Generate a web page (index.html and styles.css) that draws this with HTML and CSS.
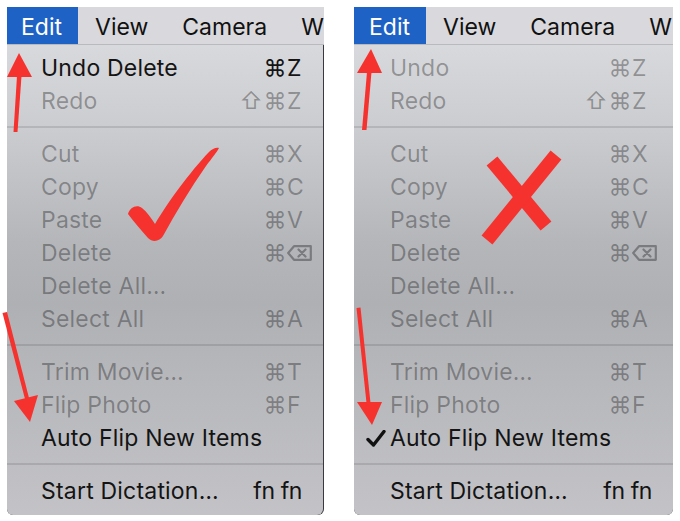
FILE: index.html
```html
<!DOCTYPE html>
<html>
<head>
<meta charset="utf-8">
<link rel="stylesheet" href="styles.css">
</head>
<body>
<div class="stage">
  <div class="panel panel-left">
    <div class="menubar">
      <span class="mb-item active">Edit</span>
      <span class="mb-item">View</span>
      <span class="mb-item">Camera</span>
      <span class="mb-item">W</span>
    </div>
    <div class="menu">
      <div class="row"><span class="chk"></span><span class="label">Undo Delete</span><span class="mods">⌘</span><span class="key">Z</span></div>
      <div class="row off"><span class="chk"></span><span class="label">Redo</span><span class="mods">⇧⌘</span><span class="key">Z</span></div>
      <div class="sep"></div>
      <div class="row off"><span class="chk"></span><span class="label">Cut</span><span class="mods">⌘</span><span class="key">X</span></div>
      <div class="row off"><span class="chk"></span><span class="label">Copy</span><span class="mods">⌘</span><span class="key">C</span></div>
      <div class="row off"><span class="chk"></span><span class="label">Paste</span><span class="mods">⌘</span><span class="key">V</span></div>
      <div class="row off"><span class="chk"></span><span class="label">Delete</span><span class="mods">⌘</span><span class="key"><svg class="del" viewBox="0 0 25 16"><path d="M7 1.2 H23.8 V14.8 H7 L1.2 8 Z" fill="none" stroke="currentColor" stroke-width="2.2" stroke-linejoin="round"/><path d="M11.5 4.5 L18.5 11.5 M18.5 4.5 L11.5 11.5" stroke="currentColor" stroke-width="2.2" stroke-linecap="round"/></svg></span></div>
      <div class="row off"><span class="chk"></span><span class="label">Delete All…</span><span class="mods"></span><span class="key"></span></div>
      <div class="row off"><span class="chk"></span><span class="label">Select All</span><span class="mods">⌘</span><span class="key">A</span></div>
      <div class="sep"></div>
      <div class="row off"><span class="chk"></span><span class="label">Trim Movie…</span><span class="mods">⌘</span><span class="key">T</span></div>
      <div class="row off"><span class="chk"></span><span class="label">Flip Photo</span><span class="mods">⌘</span><span class="key">F</span></div>
      <div class="row"><span class="chk"></span><span class="label">Auto Flip New Items</span><span class="mods"></span><span class="key"></span></div>
      <div class="sep"></div>
      <div class="row"><span class="chk"></span><span class="label">Start Dictation…</span><span class="fn">fn fn</span></div>
    </div>
  </div>

  <div class="panel panel-right">
    <div class="menubar">
      <span class="mb-item active">Edit</span>
      <span class="mb-item">View</span>
      <span class="mb-item">Camera</span>
      <span class="mb-item">W</span>
    </div>
    <div class="menu">
      <div class="row off"><span class="chk"></span><span class="label">Undo</span><span class="mods">⌘</span><span class="key">Z</span></div>
      <div class="row off"><span class="chk"></span><span class="label">Redo</span><span class="mods">⇧⌘</span><span class="key">Z</span></div>
      <div class="sep"></div>
      <div class="row off"><span class="chk"></span><span class="label">Cut</span><span class="mods">⌘</span><span class="key">X</span></div>
      <div class="row off"><span class="chk"></span><span class="label">Copy</span><span class="mods">⌘</span><span class="key">C</span></div>
      <div class="row off"><span class="chk"></span><span class="label">Paste</span><span class="mods">⌘</span><span class="key">V</span></div>
      <div class="row off"><span class="chk"></span><span class="label">Delete</span><span class="mods">⌘</span><span class="key"><svg class="del" viewBox="0 0 25 16"><path d="M7 1.2 H23.8 V14.8 H7 L1.2 8 Z" fill="none" stroke="currentColor" stroke-width="2.2" stroke-linejoin="round"/><path d="M11.5 4.5 L18.5 11.5 M18.5 4.5 L11.5 11.5" stroke="currentColor" stroke-width="2.2" stroke-linecap="round"/></svg></span></div>
      <div class="row off"><span class="chk"></span><span class="label">Delete All…</span><span class="mods"></span><span class="key"></span></div>
      <div class="row off"><span class="chk"></span><span class="label">Select All</span><span class="mods">⌘</span><span class="key">A</span></div>
      <div class="sep"></div>
      <div class="row off"><span class="chk"></span><span class="label">Trim Movie…</span><span class="mods">⌘</span><span class="key">T</span></div>
      <div class="row off"><span class="chk"></span><span class="label">Flip Photo</span><span class="mods">⌘</span><span class="key">F</span></div>
      <div class="row"><span class="chk"><svg class="tick" viewBox="0 0 20 17"><path d="M2 9.5 L7.5 15 L18 1.5" fill="none" stroke="#111" stroke-width="3.4" stroke-linecap="round" stroke-linejoin="round"/></svg></span><span class="label">Auto Flip New Items</span><span class="mods"></span><span class="key"></span></div>
      <div class="sep"></div>
      <div class="row"><span class="chk"></span><span class="label">Start Dictation…</span><span class="fn">fn fn</span></div>
    </div>
  </div>
</div>

<svg class="marks" viewBox="0 0 680 521" width="680" height="521">
  <g fill="#f5322e" stroke="none">
    <!-- left up arrow -->
    <polygon points="19,53 7,77 32,77"/>
    <polygon points="17,76 21.5,76 17.5,132 13.5,132"/>
    <!-- left down arrow -->
    <polygon points="2.5,313 7,312 29,398 25,399"/>
    <polygon points="14,401 38,395 30,422"/>
    <!-- check mark -->
    <path d="M128 214 C130 207 137 204 142 208 C147 212 151 218 155 224 C168 202 190 172 209 152 C212 149 216 147 219 148 C217 152 212 158 206 166 C190 189 176 212 163 236 C160 241 153 243 148 238 C141 230 134 222 128 214 Z"/>
    <!-- right up arrow -->
    <polygon points="371,49 357,73 382,73"/>
    <polygon points="367,72 371.5,72 366.5,130 362,130"/>
    <!-- right down arrow -->
    <polygon points="356.5,308 360.5,307.5 370.5,403 366.5,403"/>
    <polygon points="357,402 382,402 372,425"/>
  </g>
  <g stroke="#f5322e" stroke-width="14" stroke-linecap="butt">
    <line x1="492" y1="161" x2="546" y2="226"/>
    <line x1="556" y1="155" x2="487" y2="240"/>
  </g>
</svg>
</body>
</html>
```

FILE: styles.css
```css
* { box-sizing: border-box; }
html, body {
  margin: 0;
  padding: 0;
  background: #ffffff;
  width: 680px;
  height: 521px;
  overflow: hidden;
}
body {
  position: relative;
  font-family: Inter, "DejaVu Sans", sans-serif;
  -webkit-font-smoothing: antialiased;
}
.stage {
  display: flex;
  gap: 30px;
  padding: 7px 0 0 7px;
}
.panel {
  display: flex;
  flex-direction: column;
  height: 508px;
  background: #3a3a3c;
  border-radius: 0 0 6px 6px;
}
.panel-left { width: 317px; }
.panel-right { width: 319px; }

.menubar {
  height: 38px;
  flex: 0 0 38px;
  display: flex;
  align-items: stretch;
  background: #d9d9dd;
  border-bottom: 1px solid #b9babd;
  overflow: hidden;
  white-space: nowrap;
  font-size: 23px;
  color: #111;
}
.mb-item {
  display: flex;
  align-items: center;
  padding: 3px 17px 0 17px;
}
.mb-item.active {
  background: #1f62c6;
  color: #fff;
  padding-left: 14px;
  padding-right: 16px;
}
.panel-right .mb-item.active { padding-left: 15px; padding-right: 16px; }

.menu {
  flex: 1;
  display: flex;
  flex-direction: column;
  padding: 6px 0 7px 0;
  background: linear-gradient(to bottom, #d8d9dc 0%, #cbccd0 18%, #b4b6ba 42%, #aeb0b4 55%, #b7b8bc 72%, #c3c3c7 100%);
  border-radius: 0 0 6px 6px;
  margin-right: 1px;
}
.panel-right .menu { margin-right: 0; }

.row {
  height: 33px;
  flex: 0 0 33px;
  display: flex;
  align-items: center;
  font-size: 23px;
  letter-spacing: 0.2px;
  color: #141414;
  white-space: nowrap;
}
.row.off { color: rgba(0, 0, 0, 0.32); }
.chk {
  width: 34px;
  flex: 0 0 34px;
  display: flex;
  align-items: center;
  justify-content: flex-end;
  padding-right: 4px;
}
.panel-right .chk { width: 36px; flex-basis: 36px; }
.label { flex: 1; }
.mods {
  text-align: right;
  letter-spacing: 0.5px;
}
.key {
  width: 36px;
  flex: 0 0 36px;
  display: flex;
  align-items: center;
  padding-left: 0;
}
.panel-right .key { width: 41px; flex-basis: 41px; }
.del {
  width: 25px;
  height: 16px;
  display: block;
}
.tick {
  width: 20px;
  height: 17px;
  display: block;
  margin-top: 2px;
}
.fn {
  padding-right: 21px;
  letter-spacing: -0.4px;
}
.sep {
  height: 20px;
  flex: 0 0 20px;
  display: flex;
  align-items: center;
}
.sep::before {
  content: "";
  display: block;
  width: 100%;
  height: 2px;
  background: rgba(0, 0, 0, 0.11);
}
.marks {
  position: absolute;
  left: 0;
  top: 0;
  pointer-events: none;
}
```
